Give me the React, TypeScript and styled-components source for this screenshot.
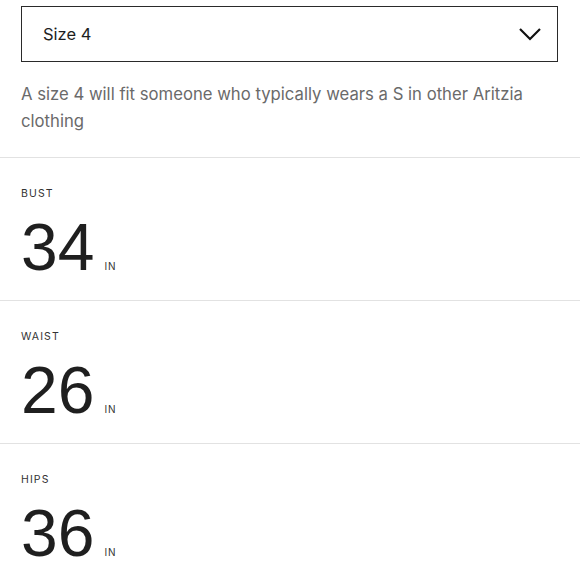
import { FC } from 'react'
import styled, { createGlobalStyle } from 'styled-components'

const GlobalStyle = createGlobalStyle`
  body {
    margin: 0;
    background: #fff;
    font-family: 'Inter', 'Liberation Sans', sans-serif;
    color: #222;
  }
`

const Page = styled.div`
  width: 580px;
  padding-top: 6px;
`

const Top = styled.div`
  padding: 0 22px 0 21px;
`

const Select = styled.div`
  height: 56px;
  box-sizing: border-box;
  border: 1.5px solid #2a2a2a;
  display: flex;
  align-items: center;
  justify-content: space-between;
  padding: 0 15px 0 21px;
  font-size: 16.5px;
  color: #1e1e1e;
`

const Description = styled.p`
  margin: 19px 0 22px;
  font-size: 16.7px;
  line-height: 27px;
  color: #6a6a6a;
`

const Measure = styled.section`
  border-top: 1.5px solid #e2e2e2;
  height: 143px;
  box-sizing: border-box;
  padding: 29px 21px 0;
`

const Label = styled.div`
  font-size: 10.5px;
  letter-spacing: 1.1px;
  color: #333;
  line-height: 14px;
`

const ValueRow = styled.div`
  display: flex;
  align-items: baseline;
  margin-top: 10px;
`

const Value = styled.span`
  font-family: 'Liberation Sans', Arial, sans-serif;
  font-size: 66px;
  line-height: 72px;
  color: #1f1f1f;
`

const Unit = styled.span`
  font-size: 10px;
  letter-spacing: 1px;
  margin-left: 10px;
  color: #333;
`

interface Measurement {
  label: string
  value: number
}

const measurements: Measurement[] = [
  { label: 'BUST', value: 34 },
  { label: 'WAIST', value: 26 },
  { label: 'HIPS', value: 36 },
]

const Chevron: FC = () => (
  <svg width="24" height="16" viewBox="0 0 24 16" fill="none">
    <path d="M2 3 L12 13 L22 3" stroke="#111" strokeWidth="2.2" />
  </svg>
)

const App: FC = () => (
  <Page>
    <GlobalStyle />
    <Top>
      <Select>
        <span>Size 4</span>
        <Chevron />
      </Select>
      <Description>
        A size 4 will fit someone who typically wears a S in other Aritzia clothing
      </Description>
    </Top>
    {measurements.map((m) => (
      <Measure key={m.label}>
        <Label>{m.label}</Label>
        <ValueRow>
          <Value>{m.value}</Value>
          <Unit>IN</Unit>
        </ValueRow>
      </Measure>
    ))}
  </Page>
)

export default App
